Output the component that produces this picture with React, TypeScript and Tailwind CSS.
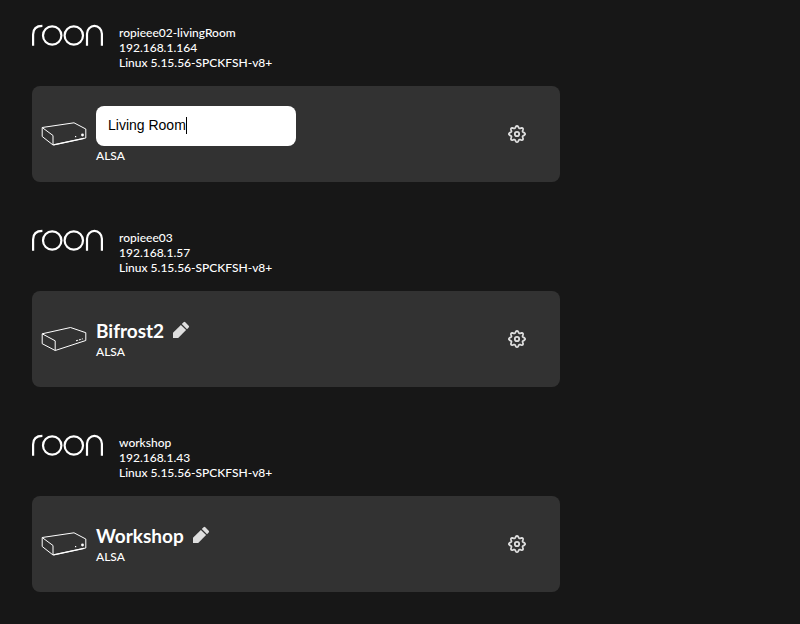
import React from "react";

const zones = [
  { host: "ropieee02-livingRoom", ip: "192.168.1.164", name: "Living Room", editing: true, box: "tall" },
  { host: "ropieee03", ip: "192.168.1.57", name: "Bifrost2", editing: false, box: "wide" },
  { host: "workshop", ip: "192.168.1.43", name: "Workshop", editing: false, box: "tall" },
];

// eight-lobed outline for the settings gear
const gearPoints = Array.from({ length: 96 }, (_, i) => {
  const a = (i / 96) * Math.PI * 2;
  const r = 7.1 + 1.05 * Math.cos(8 * a);
  return `${(9 + r * Math.cos(a)).toFixed(2)},${(9 + r * Math.sin(a)).toFixed(2)}`;
}).join(" ");

function Gear() {
  return (
    <svg width="18" height="18" viewBox="0 0 18 18" fill="none" stroke="#dedede" strokeWidth="1.8" className="shrink-0">
      <polygon points={gearPoints} strokeLinejoin="round" />
      <circle cx="9" cy="9" r="2.2" />
    </svg>
  );
}

function RoonLogo() {
  return (
    <svg width="72" height="22" viewBox="0 0 72 22" fill="none" stroke="#fff" strokeWidth="2.2" className="mt-2 shrink-0">
      <path d="M1.1 21.7V10.5C1.1 5 4.6 1.9 10.4 1.9" />
      <circle cx="20.2" cy="11.5" r="9.2" />
      <circle cx="41.8" cy="11.5" r="9.2" />
      <path d="M55 21.7V9.7a7.4 7.8 0 0 1 14.9 0V21.7" />
    </svg>
  );
}

function Device({ box }: { box: string }) {
  return (
    <svg width="46" height="26" viewBox="0 0 46 26" fill="none" stroke="#fff" strokeWidth="1" strokeLinejoin="round" className="shrink-0">
      {box === "tall" ? (
        <>
          <path d="M1.2 6.5 33 1.8l11.8 6.2v9L12 24 1.2 15.5zM1.2 6.5 12 14.5V24" />
          <path d="M12.5 23.8 43 17.3" strokeWidth="1.3" />
          <circle cx="41.5" cy="14" r="1.4" fill="#fff" stroke="none" />
          <rect x="34" y="15" width="1.2" height="1.2" fill="#fff" stroke="none" />
        </>
      ) : (
        <>
          <path d="M1.2 7.8 29.5 1.5l15.3 5.2v7.8L14.2 24.5 1.2 17.7zM1.2 7.8l13 7v9.7" />
          <path d="M35 14.8 41.8 12.8" strokeDasharray="2 1" />
        </>
      )}
    </svg>
  );
}

function Pencil() {
  return (
    <svg width="18" height="18" viewBox="0 0 18 18" fill="#dedede" className="mb-[2px]">
      <path d="M1 17V11.8L8.9 3.9l5.2 5.2L6.2 17z" />
      <path d="M9.8 3 11.6 1.3a1.2 1.2 0 0 1 1.7 0L16.7 4.7a1.2 1.2 0 0 1 0 1.7L15 8.2z" />
    </svg>
  );
}

export default function App() {
  return (
    <div className="w-full h-[624px] overflow-hidden bg-[#171717] pt-4 pl-8 text-white font-['Lato',sans-serif]">
      {zones.map((zone) => (
        <div key={zone.host} className="w-[528px] h-[205px]">
          {/* Host info */}
          <div className="flex h-[70px]">
            <RoonLogo />
            <div className="ml-[15px] pt-[9px] text-[12px] leading-[15px] font-medium">
              <p>{zone.host}</p>
              <p>{zone.ip}</p>
              <p>Linux 5.15.56-SPCKFSH-v8+</p>
            </div>
          </div>

          {/* Zone card */}
          <div className="flex items-center h-24 pl-[9px] pr-[34px] rounded-lg bg-[#323232]">
            <Device box={zone.box} />
            <div className="ml-[9px] flex-1">
              {zone.editing ? (
                <div className="flex items-center w-[200px] h-10 pl-3 pb-[2px] mt-[1px] mb-[2px] rounded-lg bg-white text-black text-[14px] font-['Liberation_Sans',sans-serif]">
                  <span>{zone.name}</span>
                  <span className="w-px h-[17px] bg-black" />
                </div>
              ) : (
                <div className="flex items-center h-[23px] mb-[2px] gap-2">
                  <span className="text-[19px] leading-[23px] font-bold">{zone.name}</span>
                  <Pencil />
                </div>
              )}
              <p className="text-[12px] leading-[15px] font-medium">ALSA</p>
            </div>
            <Gear />
          </div>
        </div>
      ))}
    </div>
  );
}
